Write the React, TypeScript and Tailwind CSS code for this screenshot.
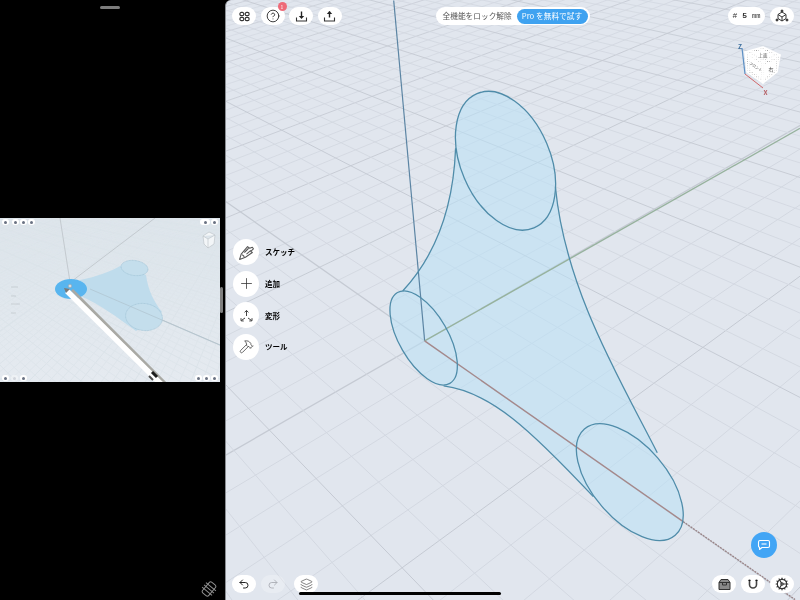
import React from "react";
import { CircleHelp, Hammer, Layers, Plus, Redo2, Cog, Undo2 } from "lucide-react";

type Pt = [number, number];
type GridLine = { x1: number; y1: number; x2: number; y2: number; major: boolean; axis: boolean; depth: number };

// lines of a ground grid in perspective, from its origin and the two vanishing points
function gridLines(o: Pt, vx: Pt, vy: Pt, a: number, b: number, uRange: Pt, vRange: Pt, every: number) {
  const out: GridLine[] = [];
  const family = (vp: Pt, along: Pt, k: number, range: Pt) => {
    for (let n = range[0]; n <= range[1]; n++) {
      const t = n * k;
      if (1 + t <= 0.02) continue;
      const px = (o[0] + t * along[0]) / (1 + t);
      const py = (o[1] + t * along[1]) / (1 + t);
      const len = Math.hypot(px - vp[0], py - vp[1]);
      const s = 5000 / len;
      out.push({
        x1: vp[0],
        y1: vp[1],
        x2: vp[0] + (px - vp[0]) * s,
        y2: vp[1] + (py - vp[1]) * s,
        major: n % every === 0,
        axis: n === 0,
        depth: 1 + t,
      });
    }
  };
  family(vy, vx, a, uRange);
  family(vx, vy, b, vRange);
  return out;
}

const mainGrid = gridLines([424, 341], [-320, -180], [1750, -420], 0.033, 0.021, [-29, 160], [-46, 240], 5);
const thumbGrid = gridLines([70, 280], [-200, 162], [300, 112], 0.0135, 0.014, [-70, 220], [-70, 220], 5);

function Grid({ lines, minor, major, floor }: { lines: GridLine[]; minor: string; major: string; floor: number }) {
  return (
    <g>
      {lines.map((l, i) => (
        <line
          key={i}
          x1={l.x1}
          y1={l.y1}
          x2={l.x2}
          y2={l.y2}
          stroke={l.major ? major : minor}
          strokeWidth={l.axis ? 1.3 : 1}
          strokeOpacity={Math.max(floor, 1 - (l.depth - 1) * 0.3)}
        />
      ))}
    </g>
  );
}

const rings = [
  { cx: 505, cy: 160.5, rx: 73, ry: 44.8, angle: 67 },
  { cx: 423, cy: 338, rx: 52.5, ry: 24.5, angle: 60 },
  { cx: 629.5, cy: 482.5, rx: 70, ry: 37, angle: 49.5 },
];

function Scene() {
  const surface =
    "M455 148 C453 200 440 250 402 291 L443 386 C490 392 530 430 593 497 L657 453 C620 380 565 290 555 187 Z";
  return (
    <svg viewBox="225 0 575 600" className="absolute inset-0 h-full w-full">
      <Grid lines={mainGrid} minor="#d3d8e1" major="#c5cad3" floor={0.55} />
      <g opacity={0.56} fill="#b9e0f6">
        <path d={surface} />
        {rings.map((r) => (
          <ellipse key={r.cx} cx={r.cx} cy={r.cy} rx={r.rx} ry={r.ry} transform={`rotate(${r.angle} ${r.cx} ${r.cy})`} />
        ))}
      </g>
      <line x1={424} y1={341} x2={393} y2={0} stroke="#5b84a3" strokeWidth={1.2} />
      <line x1={424} y1={341} x2={800} y2={128} stroke="#97b29e" strokeWidth={1.4} />
      <line x1={424} y1={341} x2={683} y2={522} stroke="#a5898b" strokeWidth={1.4} />
      <line x1={683} y1={522} x2={795} y2={600} stroke="#9a8487" strokeWidth={1.3} strokeDasharray="2 1" />
      <g fill="none" stroke="#4f8ca9" strokeWidth={1.3}>
        <path d="M455 148 C453 200 440 250 402 291" />
        <path d="M555 187 C565 290 620 380 657 453" />
        <path d="M443 386 C490 392 530 430 593 497" />
        {rings.map((r) => (
          <ellipse key={r.cx} cx={r.cx} cy={r.cy} rx={r.rx} ry={r.ry} transform={`rotate(${r.angle} ${r.cx} ${r.cy})`} />
        ))}
      </g>
    </svg>
  );
}

function ThumbScene() {
  return (
    <svg viewBox="0 218 220 164" className="absolute inset-0 h-full w-full">
      <Grid lines={thumbGrid} minor="#dee5eb" major="#dbe3e9" floor={0.4} />
      <g stroke="#bcc3c8" strokeWidth={0.8}>
        <line x1={60} y1={218} x2={70} y2={282} />
        <line x1={72} y1={281} x2={155} y2={218} />
        <line x1={72} y1={281} x2={220} y2={345} />
      </g>
      <path
        d="M80 280 C95 277 110 272 122 265 L146 275 C148 290 154 302 162 312 L136 331 C118 318 100 304 80 296 Z"
        fill="#bfdcec"
      />
      <g fill="#c4deec" stroke="#9dc1d4" strokeWidth={0.7} strokeDasharray="1 0.5">
        <ellipse cx={134.5} cy={268} rx={13.5} ry={7.5} transform="rotate(8 134.5 268)" />
        <ellipse cx={144} cy={317} rx={18.5} ry={13.5} transform="rotate(8 144 317)" />
      </g>
      <line x1={90} y1={289} x2={220} y2={345} stroke="#afc3cf" strokeWidth={0.7} />
      <ellipse cx={71} cy={289} rx={16} ry={10} fill="#58b5ef" />
      <circle cx={70} cy={286} r={1.8} fill="#d6dde2" stroke="#8d9aa3" strokeWidth={0.5} />
      {/* pencil */}
      <line x1={72} y1={290} x2={167} y2={385} stroke="#a9a9a4" strokeWidth={3} />
      <line x1={67} y1={291} x2={163} y2={386} stroke="#ffffff" strokeWidth={5.5} />
      <polygon points="64,288 70,289 66,293" fill="#7a7a7a" />
      <line x1={152} y1={372} x2={157} y2={377} stroke="#1d1d1d" strokeWidth={3} />
      <line x1={149} y1={376} x2={153} y2={380} stroke="#4b4b4b" strokeWidth={2} />
      {/* tool labels, too small to read */}
      <g fill="#000000" fillOpacity={0.05}>
        <rect x={11} y={286} width={7} height={2} />
        <rect x={11} y={295} width={5} height={2} />
        <rect x={11} y={303} width={9} height={2} />
        <rect x={11} y={312} width={5} height={2} />
      </g>
      {/* cube */}
      <path d="M203 236 L209 232 L215 235 L214 244 L208 248 L204 244 Z M203 236 L208 239 L215 235 M208 239 V248" fill="#f3f6f8" stroke="#b9c0c5" strokeWidth={0.6} />
    </svg>
  );
}

function MiniDot({ wide, faded }: { wide?: boolean; faded?: boolean }) {
  return (
    <div
      className={`flex h-[6px] items-center justify-center rounded-full ${wide ? "w-[10px]" : "w-[7px]"} ${
        faded ? "bg-white/40" : "bg-white"
      }`}
    >
      <div className={`h-[3px] w-[3px] rounded-full ${faded ? "bg-gray-300" : "bg-gray-500"}`} />
    </div>
  );
}

function Thumbnail() {
  return (
    <div className="relative h-[164px] w-[220px] overflow-hidden bg-gradient-to-b from-[#dce5eb] to-[#e5eaf0]">
      <ThumbScene />
      <div className="absolute inset-0 flex flex-col justify-between px-[2px] pb-[1px] pt-[1px]">
        <div className="flex items-center gap-[1px]">
          <MiniDot />
          <div className="w-[1px]" />
          <MiniDot />
          <MiniDot />
          <MiniDot />
          <div className="ml-auto flex gap-[1px]">
            <MiniDot wide />
            <MiniDot />
          </div>
        </div>
        <div className="flex items-center gap-[2px]">
          <MiniDot />
          <MiniDot faded />
          <MiniDot />
          <div className="ml-auto flex gap-[1px]">
            <MiniDot />
            <MiniDot />
            <MiniDot />
          </div>
        </div>
      </div>
    </div>
  );
}

function Pill({ children, className = "bg-white" }: { children: React.ReactNode; className?: string }) {
  return (
    <div className={`relative flex h-[18px] w-[24px] items-center justify-center rounded-full ${className}`}>
      {children}
    </div>
  );
}

function AppsIcon() {
  return (
    <svg width="11" height="11" viewBox="0 0 12 12" fill="none" stroke="#333" strokeWidth="1.3">
      <rect x="1" y="1.5" width="4.2" height="3.6" rx="1.6" />
      <rect x="6.8" y="1.5" width="4.2" height="3.6" rx="1.6" />
      <rect x="1" y="6.9" width="4.2" height="3.6" rx="1.6" />
      <rect x="6.8" y="6.9" width="4.2" height="3.6" rx="1.6" />
    </svg>
  );
}

function TrayIcon({ up }: { up?: boolean }) {
  return (
    <svg width="13" height="13" viewBox="0 0 13 13" fill="none">
      <path d="M1.5 7.5 V11 H11.5 V7.5" stroke="#333" strokeWidth="1.1" />
      <path d="M6.5 1.5 V7.5" stroke="#222" strokeWidth="1.4" />
      <path d={up ? "M3.8 4 L6.5 1 L9.2 4 Z" : "M3.8 6 L6.5 9 L9.2 6 Z"} fill="#222" />
    </svg>
  );
}

function ViewIcon() {
  return (
    <svg width="14" height="14" viewBox="0 0 14 14" fill="none" stroke="#333" strokeWidth="1">
      <path d="M7 3 L11 5.5 L11 9.5 L7 12 L3 9.5 L3 5.5 Z" />
      <path d="M3 5.5 L7 8 L11 5.5 M7 8 V12" />
      <circle cx="7" cy="2" r="1" fill="#333" />
      <circle cx="2" cy="11" r="1" fill="#333" />
      <circle cx="12" cy="11" r="1" fill="#333" />
    </svg>
  );
}

function ViewCube() {
  return (
    <svg width="50" height="52" viewBox="0 0 50 52" className="overflow-visible">
      <defs>
        <pattern id="dots" width="2.2" height="2.2" patternUnits="userSpaceOnUse">
          <rect width="2.2" height="2.2" fill="#ffffff" />
          <circle cx="1.1" cy="1.1" r="0.4" fill="#8f8f8f" />
        </pattern>
      </defs>
      <g stroke="#ffffff" strokeWidth="1.5" strokeLinejoin="round">
        <path d="M5 7 L23 2 L40 10 L23 17 Z" fill="url(#dots)" />
        <path d="M5 7 L23 17 L23 38 L7 27 Z" fill="url(#dots)" />
        <path d="M23 17 L40 10 L37 27 L23 38 Z" fill="url(#dots)" />
      </g>
      <g fill="#ffffff">
        <path d="M11 7.5 L23 4.5 L34 10 L23 14.5 Z" />
        <path d="M9 11 L21 18 L21 33 L10 25 Z" />
        <path d="M25 19 L37 14 L35 25 L25 33 Z" />
      </g>
      <text x="23" y="11.5" fontSize="4.5" textAnchor="middle" fill="#555">上面</text>
      <text x="15" y="23" fontSize="3.6" textAnchor="middle" fill="#444" transform="rotate(32 15 23)">フロント</text>
      <text x="31" y="26" fontSize="5" textAnchor="middle" fill="#444">右</text>
      <line x1="2" y1="3" x2="5" y2="29" stroke="#5b8fc4" strokeWidth="1.2" />
      <line x1="5" y1="29" x2="23" y2="43" stroke="#d0686c" strokeWidth="1" />
      <text x="-2" y="4" fontSize="6.5" fontWeight="700" fill="#3d6f9e">Z</text>
      <text x="23.5" y="49.5" fontSize="6.5" fontWeight="700" fill="#b56066">X</text>
    </svg>
  );
}

function SketchIcon() {
  return (
    <svg width="17" height="17" viewBox="0 0 16 16" fill="none" stroke="#555" strokeWidth="1" strokeLinejoin="round">
      <path d="M1.5 14.5 L3 9.5 L9 2.5 L11 4 L13.5 3 L14.5 4.5 L12 7 L13.5 8 L7 12.5 Z" />
      <path d="M4 10 L6 12 M6 8 L10 4 M8 9.5 L12 6" />
    </svg>
  );
}

function TransformIcon() {
  return (
    <svg width="15" height="15" viewBox="0 0 15 15" fill="none" stroke="#444" strokeWidth="1">
      <path d="M7.5 8 V2.5 M5.6 4.4 L7.5 2.4 L9.4 4.4" />
      <path d="M6 10 L2.2 12.6 M2 10.2 L2 12.8 L4.7 13" />
      <path d="M9 10 L12.8 12.6 M13 10.2 L13 12.8 L10.3 13" />
    </svg>
  );
}

function StorageIcon() {
  return (
    <svg width="13" height="13" viewBox="0 0 13 13" fill="#8a8a8a" stroke="#333" strokeWidth="1">
      <path d="M3 1.5 H10 L12 4.5 V11.5 H1 V4.5 Z" />
      <path d="M1 4.5 H12 M4.5 4.5 V7 H8.5 V4.5" fill="none" />
    </svg>
  );
}

function MagnetIcon() {
  return (
    <svg width="12" height="13" viewBox="0 0 12 13" fill="none">
      <path d="M2.5 1.5 V6.5 a3.5 3.5 0 0 0 7 0 V1.5" stroke="#444" strokeWidth="1.6" />
      <path d="M1.5 2.5 H3.5 M8.5 2.5 H10.5" stroke="#111" strokeWidth="1.2" />
    </svg>
  );
}

function ChatIcon() {
  return (
    <svg width="14" height="14" viewBox="0 0 14 14" fill="none" stroke="#ffffff" strokeWidth="1.1" strokeLinejoin="round">
      <path d="M3 2.5 H11 Q12.5 2.5 12.5 4 V8 Q12.5 9.5 11 9.5 H5 L2.5 11.5 V9.3 Q1.5 9 1.5 8 V4 Q1.5 2.5 3 2.5 Z" />
      <path d="M4.5 6 H9.5" />
    </svg>
  );
}

function RotateLockIcon() {
  return (
    <svg width="16" height="16" viewBox="0 0 16 16" fill="none" stroke="#8f8f8f" strokeWidth="1">
      <g transform="rotate(40 8 8)">
        <rect x="4" y="1" width="8" height="14" rx="2" />
        <path d="M1.5 5 H14.5 M1.5 8 H14.5 M1.5 11 H14.5" />
      </g>
    </svg>
  );
}

const tools = [
  { label: "スケッチ", icon: <SketchIcon /> },
  { label: "追加", icon: <Plus size={17} strokeWidth={1.1} color="#333" /> },
  { label: "変形", icon: <TransformIcon /> },
  { label: "ツール", icon: <Hammer size={15} strokeWidth={1.3} color="#444" /> },
];

export default function App() {
  return (
    <div className="flex h-[600px] w-[800px] overflow-hidden bg-black font-['Noto_Sans_CJK_JP',sans-serif]">
      {/* left slide-over column with the video preview */}
      <div className="relative flex h-full w-[225px] shrink-0 flex-col">
        <div className="mx-auto mt-[6px] h-[3px] w-[20px] translate-x-[-3px] rounded-full bg-[#7d7d7d]" />
        <div className="mt-[209px]">
          <Thumbnail />
        </div>
        <div className="absolute right-[2px] top-[287px] h-[26px] w-[3px] rounded-full bg-[#808080]" />
        <div className="mt-auto mb-[3px] ml-[201px]">
          <RotateLockIcon />
        </div>
      </div>

      <div className="relative h-full flex-1 overflow-hidden rounded-tl-[6px] border-l border-[#8a8d92] bg-[#e1e6ee]">
        <Scene />
        <div className="absolute inset-0 flex flex-col pb-[7px] pl-[6px] pr-[6px] pt-[7px]">
          <div className="flex items-start">
            <div className="flex gap-[4.5px]">
              <Pill>
                <AppsIcon />
              </Pill>
              <Pill>
                <CircleHelp size={14} strokeWidth={1.5} color="#222" />
                <span className="absolute right-[-2px] top-[-5px] flex h-[9px] w-[9px] items-center justify-center rounded-full bg-[#ee6a78] text-[5px] leading-none text-white">
                  1
                </span>
              </Pill>
              <Pill>
                <TrayIcon />
              </Pill>
              <Pill>
                <TrayIcon up />
              </Pill>
            </div>
            <div className="ml-[94px] flex h-[18px] w-[154px] items-center justify-between rounded-full bg-white pl-[7px] pr-[2px]">
              <span className="whitespace-nowrap text-[7.7px] text-[#555]">全機能をロック解除</span>
              <span className="flex h-[15px] w-[71px] items-center justify-center whitespace-nowrap rounded-full bg-[#3fa2f0] text-[7.7px] text-white">
                Pro を無料で試す
              </span>
            </div>
            <div className="ml-auto flex gap-[5px]">
              <div className="flex h-[18px] w-[37px] items-center justify-center gap-[5px] rounded-full bg-white font-['Liberation_Mono',monospace] text-[8px] text-[#333]">
                <span>#</span>
                <span className="font-bold">5</span>
                <span className="text-[7px]">mm</span>
              </div>
              <Pill>
                <ViewIcon />
              </Pill>
            </div>
          </div>

          <div className="absolute left-[514px] top-[45px]">
            <ViewCube />
          </div>

          <div className="mt-[214px] flex flex-col gap-[5.6px] pl-[1px]">
            {tools.map((tool) => (
              <div key={tool.label} className="flex items-center gap-[6px]">
                <div className="flex h-[26px] w-[26px] items-center justify-center rounded-full bg-white">{tool.icon}</div>
                <span className="text-[7.5px] font-semibold text-black">{tool.label}</span>
              </div>
            ))}
          </div>

          <div className="mt-auto flex items-end">
            <div className="flex gap-[5px]">
              <Pill>
                <Undo2 size={12} strokeWidth={2} color="#222" />
              </Pill>
              <Pill className="bg-white/25">
                <Redo2 size={12} strokeWidth={1.8} color="#a9adb3" />
              </Pill>
              <div className="ml-[4px]">
                <Pill>
                  <Layers size={13} strokeWidth={1.1} color="#333" />
                </Pill>
              </div>
            </div>
            <div className="ml-auto flex flex-col items-end gap-[17px]">
              <div className="mr-[17px] flex h-[26px] w-[26px] items-center justify-center rounded-full bg-[#42a5f5]">
                <ChatIcon />
              </div>
              <div className="flex gap-[5px]">
                <Pill>
                  <StorageIcon />
                </Pill>
                <Pill>
                  <MagnetIcon />
                </Pill>
                <Pill>
                  <Cog size={14} strokeWidth={2} color="#333" />
                </Pill>
              </div>
            </div>
          </div>
        </div>
        <div className="absolute bottom-[5px] left-[73px] h-[3px] w-[202px] rounded-full bg-black" />
      </div>
    </div>
  );
}
